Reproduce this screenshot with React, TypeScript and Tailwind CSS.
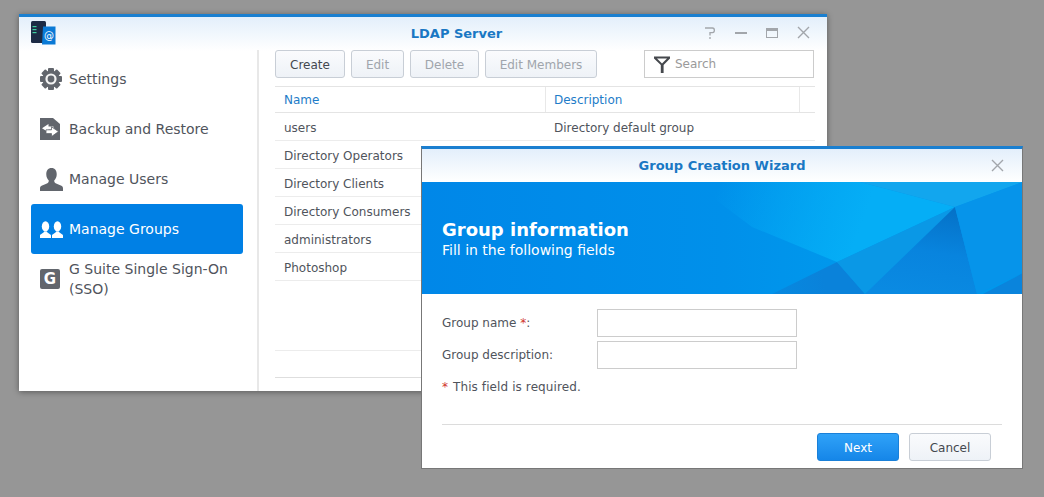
import type { ReactNode } from "react";

const font = "font-['DejaVu_Sans',Verdana,sans-serif]";

function GearIcon() {
  const teeth = [0, 45, 90, 135, 180, 225, 270, 315];
  return (
    <svg width="22" height="22" viewBox="0 0 22 22">
      {teeth.map((a) => (
        <rect key={a} x="8" y="0" width="6" height="5" rx="1" fill="#62666d" transform={`rotate(${a} 11 11)`} />
      ))}
      <circle cx="11" cy="11" r="8.6" fill="#62666d" />
      <circle cx="11" cy="11" r="5.6" fill="#f4f4f4" />
      <circle cx="11" cy="11" r="3.4" fill="#62666d" />
    </svg>
  );
}

function BackupIcon() {
  return (
    <svg width="20" height="22" viewBox="0 0 20 22">
      <path d="M0 0H13L20 6V22H0Z" fill="#62666d" />
      <path d="M8.5 6L2 10.2L8.5 14.2V11.6H13.5V8.6H8.5Z" fill="#fff" />
      <path d="M11.5 8.8L18.5 13.6L11.5 18.6V15.6H6V11.8H11.5Z" fill="#fff" stroke="#62666d" strokeWidth="0.8" />
    </svg>
  );
}

function UserIcon() {
  return (
    <svg width="23" height="23" viewBox="0 0 22 22">
      <path
        d="M11 0C7.6 0 6 2.6 6 6C6 8.6 7 10.6 8.4 12C8.4 13.4 8 14.2 6.6 14.8L1.5 17C0.5 17.5 0 18.4 0 19.6V22H22V19.6C22 18.4 21.5 17.5 20.5 17L15.4 14.8C14 14.2 13.6 13.4 13.6 12C15 10.6 16 8.6 16 6C16 2.6 14.4 0 11 0Z"
        fill="#62666d"
      />
    </svg>
  );
}

function GroupIcon() {
  const person = "M0 17V14.6C0 13.2 3.2 12.8 4.2 10.6H6.8C7.8 12.8 11 13.2 11 14.6V17Z";
  return (
    <svg width="23" height="17" viewBox="0 0 23 17" fill="#fff">
      <ellipse cx="5.5" cy="5.4" rx="3.7" ry="5.2" />
      <path d={person} />
      <ellipse cx="17.5" cy="5.4" rx="3.7" ry="5.2" />
      <path d={person} transform="translate(12 0)" />
    </svg>
  );
}

function GIcon() {
  return (
    <div className="flex h-5 w-5 items-center justify-center rounded-[2px] bg-[#62666d] text-[15px] font-bold leading-none text-white">
      G
    </div>
  );
}

function AppLogo() {
  return (
    <svg width="25" height="24" viewBox="0 0 25 24">
      <rect x="0" y="0" width="15" height="22" rx="1.5" fill="#1c2b45" />
      <rect x="1.5" y="5" width="4" height="1.2" fill="#3fd0a0" />
      <rect x="1.5" y="8" width="4" height="1.2" fill="#3fd0a0" />
      <rect x="1.5" y="11" width="4" height="1.2" fill="#3fd0a0" />
      <path d="M12 5.5H24.5V23.5H11Z" fill="#0a7ad6" />
      <text x="18" y="17.5" textAnchor="middle" fontSize="10" fill="#fff">
        @
      </text>
    </svg>
  );
}

function HelpIcon() {
  return (
    <svg width="12" height="12" viewBox="0 0 12 12" fill="none" stroke="#a2a6ab" strokeWidth="1.3">
      <path d="M1 1H8.5C11 1 11 5.6 8.5 5.6H6V8.5" />
      <path d="M6 10V12" />
    </svg>
  );
}

function SideItem({
  icon,
  active,
  children,
}: {
  icon: ReactNode;
  active?: boolean;
  children: ReactNode;
}) {
  return (
    <div
      className={`flex h-[50px] items-center rounded-[3px] pl-[9px] pr-2 text-[14px] leading-[20px] ${
        active ? "bg-[#0080e5] text-white" : "text-[#50545c]"
      }`}
    >
      <div className="flex w-[29px] shrink-0 items-center">{icon}</div>
      <div>{children}</div>
    </div>
  );
}

function ToolButton({ width, disabled, children }: { width: string; disabled?: boolean; children: ReactNode }) {
  return (
    <button
      className={`h-[28px] rounded-[3px] border border-[#c8ced6] bg-gradient-to-b from-[#fafbfd] to-[#eef2f7] pt-[1px] text-[12px] ${width} ${
        disabled ? "text-[#a0a5ac]" : "text-[#44484f]"
      }`}
    >
      {children}
    </button>
  );
}

function Row({ name, description }: { name: string; description?: string }) {
  return (
    <div className="flex h-[28px] shrink-0 items-center border-b border-[#ececec] pt-[2px] text-[12px] text-[#50545c]">
      <div className="w-[270px] pl-[9px]">{name}</div>
      <div className="pl-[9px]">{description}</div>
    </div>
  );
}

function CloseIcon({ size }: { size: number }) {
  return (
    <svg width={size} height={size} viewBox="0 0 13 13" fill="none" stroke="#a2a6ab" strokeWidth="1.4">
      <path d="M1 1L12 12M12 1L1 12" />
    </svg>
  );
}

function Banner() {
  return (
    <svg className="absolute inset-0" width="601" height="112" viewBox="0 0 601 112" preserveAspectRatio="none">
      <defs>
        <linearGradient id="base" x1="0" x2="1" y1="0" y2="0">
          <stop offset="0" stopColor="#0087e8" />
          <stop offset="0.5" stopColor="#0090ea" />
          <stop offset="0.7" stopColor="#0098ec" />
        </linearGradient>
        <linearGradient id="bright" gradientUnits="userSpaceOnUse" x1="290" y1="20" x2="430" y2="70">
          <stop offset="0" stopColor="#05aef6" stopOpacity="0" />
          <stop offset="1" stopColor="#05aef6" />
        </linearGradient>
        <linearGradient id="deep" x1="0.6" x2="0.4" y1="0" y2="1">
          <stop offset="0" stopColor="#0572c8" />
          <stop offset="0.5" stopColor="#0884de" />
          <stop offset="1" stopColor="#0a8ae2" />
        </linearGradient>
        <linearGradient id="fade" gradientUnits="userSpaceOnUse" x1="300" y1="112" x2="400" y2="90">
          <stop offset="0" stopColor="#0a82da" stopOpacity="0.3" />
          <stop offset="1" stopColor="#0a82da" />
        </linearGradient>
      </defs>
      <rect width="601" height="112" fill="url(#base)" />
      <polygon points="270,0 438,0 533,25 415,80 330,45" fill="url(#bright)" />
      <polygon points="438,0 601,0 533,25" fill="#12a6ee" />
      <polygon points="350,112 415,80 443,112" fill="url(#fade)" />
      <polygon points="415,80 533,25 443,112" fill="#0a98e6" />
      <polygon points="533,25 443,112 555,112" fill="url(#deep)" />
      <polygon points="533,25 601,0 601,91 555,112" fill="#0694ea" />
      <polygon points="601,91 561,112 601,112" fill="#0a84dc" />
    </svg>
  );
}

export default function App() {
  return (
    <div className={`relative h-[497px] w-[1044px] overflow-hidden bg-[#969696] ${font}`}>
      {/* main window */}
      <div className="absolute left-[19px] top-[14px] flex h-[377px] w-[808px] flex-col border-t-[3px] border-[#1a7fd0] bg-white shadow-[0_1px_6px_rgba(0,0,0,0.4)]">
        <div className="absolute inset-x-0 top-0 h-[34px] bg-gradient-to-b from-[#e3effb] to-white" />
        <div className="relative flex h-[33px] items-center justify-center">
          <div className="absolute left-[12px] top-[4px]">
            <AppLogo />
          </div>
          <div className="ml-[67px] text-[13px] font-bold text-[#1a78c4]">LDAP Server</div>
          <div className="absolute right-[17px] top-[9px] flex items-center gap-[19px]">
            <HelpIcon />
            <div className="h-[2px] w-[12px] bg-[#a2a6ab]" />
            <div className="h-[10px] w-[12px] border border-t-[3px] border-[#a2a6ab]" />
            <CloseIcon size={13} />
          </div>
        </div>
        <div className="relative flex min-h-0 flex-1">
          <div className="w-[240px] shrink-0 border-r-2 border-[#e8e8e8] pl-[12px] pr-[14px] pt-[4px]">
            <SideItem icon={<GearIcon />}>Settings</SideItem>
            <SideItem icon={<BackupIcon />}>Backup and Restore</SideItem>
            <SideItem icon={<UserIcon />}>Manage Users</SideItem>
            <SideItem icon={<GroupIcon />} active>
              Manage Groups
            </SideItem>
            <SideItem icon={<GIcon />}>G Suite Single Sign-On (SSO)</SideItem>
          </div>
          <div className="flex min-w-0 flex-1 flex-col pl-[16px] pr-[12px]">
            <div className="flex items-center gap-[6px]">
              <ToolButton width="w-[70px]">Create</ToolButton>
              <ToolButton width="w-[53px]" disabled>
                Edit
              </ToolButton>
              <ToolButton width="w-[69px]" disabled>
                Delete
              </ToolButton>
              <ToolButton width="w-[112px]" disabled>
                Edit Members
              </ToolButton>
              <div className="ml-[41px] flex h-[28px] w-[170px] items-center border border-[#ccc] bg-white pl-[9px]">
                <svg width="16" height="17" viewBox="0 0 16 17">
                  <path d="M0 0.5H16V2.5L9.6 9V17H6.8V9L0 2.5Z" fill="#45484d" />
                  <path d="M3 2.5H13L8 7.5Z" fill="#fff" />
                </svg>
                <span className="ml-[5px] text-[12px] text-[#9a9a9a]">Search</span>
              </div>
            </div>
            <div className="mt-[8px] flex h-[27px] shrink-0 items-center border-y border-[#e4e4e4] text-[12px] text-[#1e7cc8]">
              <div className="flex h-full w-[271px] items-center border-r border-[#e8e8e8] pl-[9px] pt-[1px]">Name</div>
              <div className="flex h-full w-[254px] items-center border-r border-[#e8e8e8] pl-[8px] pt-[1px]">
                Description
              </div>
            </div>
            <Row name="users" description="Directory default group" />
            <Row name="Directory Operators" />
            <Row name="Directory Clients" />
            <Row name="Directory Consumers" />
            <Row name="administrators" />
            <Row name="Photoshop" />
            <div className="h-[70px] shrink-0 border-b border-[#ececec]" />
            <div className="h-[27px] shrink-0 border-b border-[#dedede]" />
          </div>
        </div>
      </div>

      {/* wizard dialog */}
      <div className="absolute left-[421px] top-[146px] flex h-[323px] w-[602px] flex-col border-x border-b border-x-[#777] border-b-[#777] border-t-[3px] border-t-[#1a7fd0] bg-white">
        <div className="relative flex h-[33px] shrink-0 items-center justify-center bg-gradient-to-b from-[#e3effb] to-white">
          <div className="text-[13px] font-bold text-[#1a78c4]">Group Creation Wizard</div>
          <div className="absolute right-[18px] top-[10px]">
            <CloseIcon size={13} />
          </div>
        </div>
        <div className="relative h-[112px] shrink-0 overflow-hidden">
          <Banner />
          <div className="relative pl-[20px] pt-[37px] text-white">
            <div className="text-[18px] font-bold leading-[22px]">Group information</div>
            <div className="text-[14px] leading-[18px]">Fill in the following fields</div>
          </div>
        </div>
        <div className="flex flex-1 flex-col px-[20px] pt-[15px] text-[12px] text-[#50545c]">
          <div className="flex flex-col gap-[4px]">
            <div className="flex items-center">
              <div className="w-[155px]">
                Group name <span className="text-[#d0342c]">*</span>:
              </div>
              <div className="h-[28px] w-[200px] border border-[#ccc] bg-white" />
            </div>
            <div className="flex items-center">
              <div className="w-[155px]">Group description:</div>
              <div className="h-[28px] w-[200px] border border-[#ccc] bg-white" />
            </div>
          </div>
          <div className="mt-[10px] leading-[17px] tracking-[0.1px]">
            <span className="mr-[1px] text-[#d0342c]">*</span> This field is required.
          </div>
          <div className="mt-[28px] border-t border-[#dcdcdc]" />
          <div className="mt-[8px] flex justify-end gap-[10px] pr-[11px]">
            <button className="h-[28px] w-[82px] rounded-[3px] border border-[#1a80d8] bg-gradient-to-b from-[#2fa2f8] to-[#1586e8] pt-[1px] text-[12px] text-white">
              Next
            </button>
            <button className="h-[28px] w-[82px] rounded-[3px] border border-[#c8ced6] bg-gradient-to-b from-[#fafbfd] to-[#eef2f7] pt-[1px] text-[12px] text-[#44484f]">
              Cancel
            </button>
          </div>
        </div>
      </div>
    </div>
  );
}
